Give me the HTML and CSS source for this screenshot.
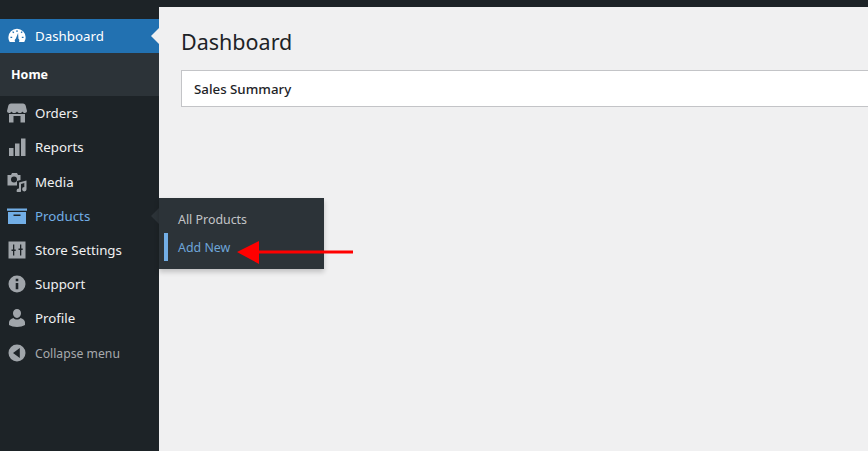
FILE: index.html
```html
<!DOCTYPE html>
<html lang="en">

<head>
    <meta charset="UTF-8">
    <link rel="stylesheet" href="styles.css">
    <title>Dashboard</title>
</head>

<body>
    <div class="topbar"></div>
    <div class="wrap">
        <nav class="sidebar">
            <a class="item current">
                <svg class="icon" viewBox="-1 0 22 22">
                    <path fill="#fff" d="M10 3a9.500 9.500 0 0 0-9.500 9.500c0 2 .6 3.700 1.500 5h16c.9-1.300 1.500-3 1.500-5A9.500 9.500 0 0 0 10 3z"/>
                    <path fill="#2271b1" d="M9.300 4.800h1.400v1.900H9.300zM4.700 6.700l1-1 1.300 1.300-1 1zM2.800 11.800h1.900v1.400H2.800zM15.300 11.800h1.900v1.400h-1.900zM14 7l1.300-1.300 1 1L15 8zM11.200 7.800l.4 6.200c.7.500 1 1.200 1 2 0 .6-.2 1.100-.5 1.500H8c-.3-.4-.5-.9-.5-1.500 0-.8.4-1.500 1.100-2z"/>
                </svg>
                <span>Dashboard</span>
            </a>
            <div class="submenu">
                <a class="subitem">Home</a>
            </div>
            <a class="item">
                <svg class="icon" viewBox="0 0 20 20"><path d="M4 .5h12c1.500 0 2.300 1 2.700 2.200L20 8c0 1.200-1 2-2.200 2-1 0-2-.6-2.300-1.500-.3.900-1.300 1.500-2.700 1.500s-2.500-.6-2.800-1.500c-.3.900-1.400 1.500-2.800 1.500S4.700 9.400 4.500 8.500C4.200 9.400 3.200 10 2.200 10 1 10 0 9.200 0 8l1.300-5.300C1.700 1.500 2.500.5 4 .5zM2 11h16v8.500h-4.500V13h-7v6.500H2z"/></svg>
                <span>Orders</span>
            </a>
            <a class="item">
                <svg class="icon" viewBox="0 0 20 20"><path d="M2 11h4.500v8H2zM8 6.500h4.500V19H8zM14 1.500h4.500V19H14z"/></svg>
                <span>Reports</span>
            </a>
            <a class="item">
                <svg class="icon" viewBox="0 0 20 20"><path fill-rule="evenodd" d="M.5 3H4l1-2h5l1 2h2.500v5L10 9v4.500H.5zM7 4.500a3 3 0 1 0 0 6 3 3 0 0 0 0-6z"/><path d="M12 10.500l7.500-2V17a2.200 2.200 0 1 1-2.200-2V11l-3.300 1v6.500a2.200 2.200 0 1 1-2-2.100z"/></svg>
                <span>Media</span>
            </a>
            <a class="item active">
                <svg class="icon" viewBox="0 0 20 20"><path d="M0 2.500h20v2.200H0zM1 6h18v12H1zM6.500 8.500V10h7V8.500z" fill-rule="evenodd"/></svg>
                <span>Products</span>
            </a>
            <a class="item">
                <svg class="icon" viewBox="0 0 20 20"><path fill-rule="evenodd" d="M1.500 1.500h17v17h-17zM6 4.500v5H4.500V11H6v4.500h1.300V11h1.400V9.500H7.300v-5zM13 4.500v4h-1.500V10H13v5.500h1.300V10h1.400V8.500h-1.400v-4z"/></svg>
                <span>Store Settings</span>
            </a>
            <a class="item">
                <svg class="icon" viewBox="0 0 20 20"><path fill-rule="evenodd" d="M10 1.500a8.500 8.500 0 1 1 0 17 8.500 8.500 0 0 1 0-17zM8.700 4.800v2.500h2.600V4.800zM8.700 9v6.200h2.600V9z"/></svg>
                <span>Support</span>
            </a>
            <a class="item">
                <svg class="icon" viewBox="0 0 20 20"><path d="M10 1a4 4 0 0 1 4 4.300c0 2.300-1.800 4.700-4 4.700S6 7.600 6 5.300A4 4 0 0 1 10 1zM6.500 10c.9 1 2.100 1.600 3.500 1.600s2.600-.6 3.500-1.600c2.600.7 4.500 2.300 4.500 4.500v2.500c-2 1.300-5 2-8 2s-6-.7-8-2v-2.500C2 12.300 3.900 10.700 6.500 10z"/></svg>
                <span>Profile</span>
            </a>
            <a class="item collapse">
                <svg class="icon" viewBox="0 0 20 20"><path fill-rule="evenodd" d="M10 1.500a8.500 8.500 0 1 1 0 17 8.500 8.500 0 0 1 0-17zM12.800 5L6 10l6.800 5z"/></svg>
                <span>Collapse menu</span>
            </a>

            <div class="flyout">
                <a class="flyitem">All Products</a>
                <a class="flyitem selected">Add New</a>
            </div>
        </nav>

        <main class="content">
            <h1>Dashboard</h1>
            <div class="panel">Sales Summary</div>
        </main>
    </div>

    <svg class="arrow" width="120" height="26" viewBox="0 0 120 26"><path fill="#f00" d="M0 12L22 1v9.500h94v3H22V24z"/></svg>
</body>

</html>
```

FILE: styles.css
```css
* {
    margin: 0;
    padding: 0;
    box-sizing: border-box;
}

html,
body {
    height: 100%;
    overflow: hidden;
}

body {
    font-family: 'Noto Sans', 'Open Sans', sans-serif;
    font-size: 14px;
    background-color: #f0f0f1;
    color: #1d2327;
}

.topbar {
    height: 7px;
    background-color: #1d2327;
}

.wrap {
    display: flex;
    height: 444px;
}

.sidebar {
    position: relative;
    width: 159px;
    padding-top: 12px;
    background-color: #1d2327;
    flex-shrink: 0;
}

.item {
    display: flex;
    align-items: center;
    gap: 8px;
    height: 34.2px;
    padding-left: 7px;
    color: #f0f0f1;
    font-size: 13.3px;
}

.icon {
    width: 20px;
    height: 20px;
    fill: #a0a5aa;
    flex-shrink: 0;
}

.current {
    position: relative;
    height: 34px;
    background-color: #2271b1;
    color: #fff;
}

/* setas */
.current::after {
    content: "";
    position: absolute;
    right: 0;
    top: 9px;
    border: 8px solid transparent;
    border-right-color: #f0f0f1;
    border-left-width: 0;
}

.active {
    position: relative;
    color: #72aee6;
}

.active .icon {
    fill: #72aee6;
}

.active::after {
    content: "";
    position: absolute;
    right: 0;
    top: 9px;
    border: 8px solid transparent;
    border-right-color: #2c3338;
    border-left-width: 0;
}

.collapse {
    color: #a7aaad;
    font-size: 12.2px;
    padding-top: 1px;
}

.submenu {
    height: 43.2px;
    display: flex;
    align-items: center;
    padding-left: 11px;
    background-color: #2c3338;
}

.subitem {
    color: #fff;
    font-size: 12.5px;
    font-weight: 700;
}

.flyout {
    position: absolute;
    left: 159px;
    top: 191px;
    width: 165px;
    height: 71px;
    padding: 7px 0 0 5px;
    background-color: #2c3338;
    box-shadow: 0 3px 5px rgba(0, 0, 0, .2);
}

.flyitem {
    display: flex;
    align-items: center;
    height: 28px;
    padding-left: 10px;
    border-left: 4px solid transparent;
    color: #c3c4c7;
    font-size: 12.4px;
}

.selected {
    border-left-color: #72aee6;
    color: #6ea5d8;
}

.content {
    flex: 1;
    min-width: 0;
    padding: 20px 0 0 22px;
}

h1 {
    font-size: 21.5px;
    font-weight: 400;
    line-height: 30px;
    margin-bottom: 13px;
}

.panel {
    display: flex;
    align-items: center;
    height: 37px;
    width: 700px;
    padding-left: 12px;
    background-color: #fff;
    border: 1px solid #c3c4c7;
    font-size: 13.3px;
    font-weight: 500;
}

.arrow {
    position: absolute;
    left: 237px;
    top: 240px;
}
```
